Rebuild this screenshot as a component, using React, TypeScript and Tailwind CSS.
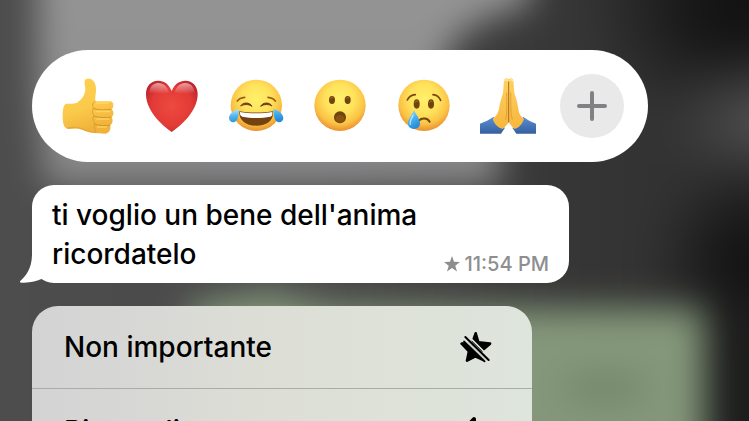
import type { ReactNode } from "react";

function Wallpaper() {
  return (
    <svg
      aria-hidden="true"
      className="absolute inset-0 h-full w-full"
      viewBox="0 0 749 421"
      preserveAspectRatio="none"
    >
      <defs>
        <filter id="soft" filterUnits="userSpaceOnUse" x="-100" y="-100" width="950" height="620" colorInterpolationFilters="sRGB">
          <feGaussianBlur stdDeviation="17" />
        </filter>
        <linearGradient id="base" x1="0" y1="0" x2="1" y2="0">
          <stop offset="0" stopColor="#4e4e4e" />
          <stop offset="0.45" stopColor="#494949" />
          <stop offset="0.7" stopColor="#363636" />
          <stop offset="1" stopColor="#2a2a2a" />
        </linearGradient>
        <linearGradient id="light" x1="0" y1="0" x2="0" y2="1">
          <stop offset="0" stopColor="#969696" />
          <stop offset="0.55" stopColor="#929292" />
          <stop offset="1" stopColor="#868688" />
        </linearGradient>
        <radialGradient id="dark">
          <stop offset="0" stopColor="#101010" />
          <stop offset="0.4" stopColor="#121212" stopOpacity="0.75" />
          <stop offset="1" stopColor="#1c1c1c" stopOpacity="0" />
        </radialGradient>
        <radialGradient id="glow">
          <stop offset="0" stopColor="#555555" />
          <stop offset="1" stopColor="#404040" stopOpacity="0" />
        </radialGradient>
      </defs>
      <g filter="url(#soft)">
        <rect x="-100" y="-100" width="950" height="620" fill="url(#base)" />
        <path d="M38-100H540L530 5C480 18 442 35 442 75L500 140V187H45L38 100Z" fill="url(#light)" />
        <ellipse cx="745" cy="5" rx="165" ry="130" fill="url(#dark)" />
        <ellipse cx="760" cy="120" rx="110" ry="75" fill="url(#glow)" />
        <ellipse cx="760" cy="262" rx="115" ry="110" fill="url(#dark)" />
        <path d="M190 306L270 292L330 308H704V520H190Z" fill="#84977a" />
        <ellipse cx="605" cy="388" rx="45" ry="14" fill="#71856a" />
        <path d="M714 310H850V520H714Z" fill="#1c1d1c" />
      </g>
    </svg>
  );
}

function ThumbsUp() {
  return (
    <svg viewBox="18 27 192 192" className="size-16" aria-hidden="true">
      <defs>
        <linearGradient id="thumb" x1="0" y1="0" x2="0.3" y2="1">
          <stop offset="0" stopColor="#ffd052" />
          <stop offset="0.6" stopColor="#fcca4b" />
          <stop offset="1" stopColor="#f0b23a" />
        </linearGradient>
      </defs>
      <path
        d="M104 48C106 40 116 39 124 43C136 49 139 65 138 79C137 90 135 98 136 109H176C186 108 191 114 190 121C190 128 187 132 184 133C192 136 193 153 184 157C190 162 189 177 180 181C184 188 180 206 166 206L137 204C117 202 107 199 97 194C84 189 68 190 54 192C42 192 37 172 38 151C38 131 41 117 50 116C62 116 72 117 81 113C94 106 104 91 106 76C107 66 102 57 104 48Z"
        fill="url(#thumb)"
      />
      <path d="M136 109C128 112 125 121 131 128C126 134 126 145 132 151C128 157 128 169 135 174C131 181 132 193 139 202" fill="none" stroke="#dca035" strokeWidth="3" />
      <path d="M132 131C148 136 168 135 183 133M133 154C150 159 169 158 183 157M136 178C149 182 166 183 180 181" fill="none" stroke="#d6962a" strokeWidth="3" strokeLinecap="round" />
      <path d="M140 114H176M139 139H178M141 162H177M143 186H169" fill="none" stroke="#ffdc6c" strokeWidth="5" strokeLinecap="round" opacity="0.7" />
      <path d="M53 189C66 187 82 186 98 192C109 198 121 201 138 203" fill="none" stroke="#d9952a" strokeWidth="4" opacity="0.5" />
    </svg>
  );
}

function Heart() {
  return (
    <svg viewBox="270 27 192 192" className="size-16" aria-hidden="true">
      <defs>
        <radialGradient id="heart" cx="0.5" cy="0.5" r="0.6">
          <stop offset="0" stopColor="#ee4a40" />
          <stop offset="0.65" stopColor="#e23a36" />
          <stop offset="1" stopColor="#bd222b" />
        </radialGradient>
        <linearGradient id="shine" x1="0" y1="0" x2="0" y2="1">
          <stop offset="0" stopColor="#fff" stopOpacity="0.55" />
          <stop offset="1" stopColor="#fff" stopOpacity="0" />
        </linearGradient>
      </defs>
      <path
        d="M365 78C356 57 343 47 325 47C302 47 288 64 288 87C288 130 322 170 365 201C409 170 443 130 443 87C443 64 428 47 406 47C388 47 373 57 365 78Z"
        fill="url(#heart)"
      />
      <path d="M298 82C299 65 310 54 325 54C341 54 352 65 357 82C340 88 314 88 298 82Z" fill="url(#shine)" />
      <path d="M433 82C432 65 421 54 406 54C390 54 379 65 374 82C391 88 417 88 433 82Z" fill="url(#shine)" />
    </svg>
  );
}

function FaceGradient({ id }: { id: string }) {
  return (
    <defs>
      <radialGradient id={id} cx="0.5" cy="0.38" r="0.64">
        <stop offset="0" stopColor="#fff06a" />
        <stop offset="0.45" stopColor="#ffe25c" />
        <stop offset="0.75" stopColor="#fbc346" />
        <stop offset="1" stopColor="#e68a2a" />
      </radialGradient>
      <linearGradient id={id + "-tear"} x1="0" y1="0" x2="0.4" y2="1">
        <stop offset="0" stopColor="#bdebff" />
        <stop offset="0.5" stopColor="#50b5ef" />
        <stop offset="1" stopColor="#258ddb" />
      </linearGradient>
    </defs>
  );
}

function Joy() {
  return (
    <svg viewBox="27 27 192 192" className="size-16" aria-hidden="true">
      <FaceGradient id="joy" />
      <circle cx="124" cy="121" r="77" fill="url(#joy)" />
      <path d="M67 108C72 101 79 98 89 97M159 97C169 98 176 101 181 108" fill="none" stroke="#9b5d17" strokeWidth="5" strokeLinecap="round" />
      <path d="M77 123C84 111 104 111 111 124C101 117 87 117 77 123ZM137 124C144 111 164 111 171 123C161 117 147 117 137 124Z" fill="#6c3d10" stroke="#6c3d10" strokeWidth="3" strokeLinejoin="round" />
      <path d="M73 139C98 144 149 144 174 139C177 165 157 182 124 182C91 182 71 165 73 139Z" fill="#72420f" />
      <path d="M75 141C99 146 148 146 172 141C173 148 172 153 166 155C141 160 107 160 82 155C76 153 74 148 75 141Z" fill="#fff" />
      <path d="M72 132C59 134 43 146 42 158C42 168 50 174 59 171C69 167 71 151 72 132ZM175 132C188 134 204 146 205 158C205 168 197 174 188 171C178 167 176 151 175 132Z" fill="url(#joy-tear)" />
    </svg>
  );
}

function Surprised() {
  return (
    <svg viewBox="279 27 192 192" className="size-16" aria-hidden="true">
      <FaceGradient id="surprised" />
      <circle cx="375" cy="121" r="77" fill="url(#surprised)" />
      <ellipse cx="351" cy="105" rx="9" ry="12" fill="#70430f" />
      <ellipse cx="398" cy="105" rx="9" ry="12" fill="#70430f" />
      <path d="M346 101C348 98 352 97 355 99M393 101C395 98 399 97 402 99" stroke="#ad7425" strokeWidth="3" fill="none" />
      <ellipse cx="375" cy="157" rx="18" ry="18" fill="#70430f" />
      <ellipse cx="375" cy="161" rx="13" ry="11" fill="#895312" />
    </svg>
  );
}

function Crying() {
  return (
    <svg viewBox="21 27 192 192" className="size-16" aria-hidden="true">
      <FaceGradient id="crying" />
      <circle cx="117" cy="121" r="77" fill="url(#crying)" />
      <path d="M67 105C71 96 80 90 91 89M144 89C155 90 163 97 167 106" fill="none" stroke="#76480e" strokeWidth="5" strokeLinecap="round" />
      <ellipse cx="95" cy="117" rx="9" ry="14" fill="#70430f" />
      <ellipse cx="138" cy="117" rx="9" ry="14" fill="#70430f" />
      <path d="M90 113C92 108 96 107 99 110M133 113C135 108 139 107 142 110" stroke="#b17a2c" strokeWidth="3" fill="none" />
      <path d="M103 166C110 158 127 158 134 170" fill="none" stroke="#70430f" strokeWidth="6" strokeLinecap="round" />
      <path d="M87 134C82 148 69 161 69 175C69 186 77 192 87 192C97 192 105 186 105 175C105 161 92 148 87 134Z" fill="url(#crying-tear)" />
      <path d="M84 151C79 161 74 168 76 178" fill="none" stroke="#dcf6ff" strokeWidth="4" strokeLinecap="round" opacity="0.7" />
    </svg>
  );
}

function Praying() {
  return (
    <svg viewBox="273 27 192 192" className="size-16" aria-hidden="true">
      <defs>
        <linearGradient id="palms" x1="0" y1="0" x2="0" y2="1">
          <stop offset="0" stopColor="#ffd262" />
          <stop offset="1" stopColor="#f6b63c" />
        </linearGradient>
        <linearGradient id="sleeves" x1="0" y1="0" x2="0" y2="1">
          <stop offset="0" stopColor="#5b90d6" />
          <stop offset="1" stopColor="#345f9f" />
        </linearGradient>
      </defs>
      <path d="M285 176C299 171 314 163 326 155C331 173 341 185 360 188L348 206H285ZM453 176C439 171 426 163 414 155C409 173 401 185 382 188L394 206H453Z" fill="url(#sleeves)" />
      <path
        d="M371 43C367 38 359 38 357 46L354 84C350 98 345 111 342 131C339 145 334 153 323 161C327 175 337 187 353 192C361 186 366 179 371 172C377 179 381 186 389 192C404 187 413 175 417 161C406 153 402 145 400 131C397 111 393 98 388 84L385 46C383 38 375 38 371 43Z"
        fill="url(#palms)"
      />
      <path d="M371 50V172" stroke="#b06c17" strokeWidth="3" />
      <path d="M365 83C365 115 367 144 362 164M377 83C378 115 376 144 382 164" fill="none" stroke="#e3a037" strokeWidth="3" />
      <path d="M358 48C361 43 367 43 368 48M374 48C376 43 381 43 384 48" fill="none" stroke="#fff0ca" strokeWidth="3" />
    </svg>
  );
}

const reactions: { label: string; icon: ReactNode }[] = [
  { label: "Mi piace", icon: <ThumbsUp /> },
  { label: "Cuore", icon: <Heart /> },
  { label: "Risata", icon: <Joy /> },
  { label: "Sorpresa", icon: <Surprised /> },
  { label: "Tristezza", icon: <Crying /> },
  { label: "Grazie", icon: <Praying /> },
];

function StarSlash() {
  return (
    <svg viewBox="90 60 96 96" className="size-8" aria-hidden="true">
      <path
        d="M137 67L145 94L180 98L157 118L129 90ZM95 98L111 97L162 148L136 136L111 149L117 121Z"
        fill="#000"
        stroke="#000"
        strokeWidth="8"
        strokeLinejoin="round"
      />
      <path d="M96 80L173 157M111 71L184 144" stroke="#dfe5dc" strokeWidth="5" fill="none" />
      <path d="M106 78L176 147" stroke="#000" strokeWidth="6" strokeLinecap="round" />
      <path d="M102 91L164 151" stroke="#000" strokeWidth="5" strokeLinecap="round" />
    </svg>
  );
}

function ReplyArrow() {
  return (
    <svg viewBox="0 0 32 32" className="size-8" aria-hidden="true">
      <path d="M14 4V11C24 11 30 17 30 28C26 22 22 20 15 20V26L3 16Z" fill="#000" stroke="#000" strokeWidth="4" strokeLinejoin="round" />
    </svg>
  );
}

function MenuItem({ label, icon }: { label: string; icon: ReactNode }) {
  return (
    <button type="button" className="flex h-[83px] w-full shrink-0 items-center justify-between pr-10 pl-8 text-left text-[28px] leading-8 font-medium">
      <span>{label}</span>
      {icon}
    </button>
  );
}

export default function App() {
  return (
    <main className="relative h-screen overflow-hidden bg-[#444] font-[Inter,sans-serif] text-black">
      <Wallpaper />
      <div className="relative flex flex-col items-start px-8 pt-[50px]">
        <div role="toolbar" aria-label="Reazioni" className="flex h-28 max-w-full items-center gap-5 rounded-full bg-white px-6">
          {reactions.map(({ label, icon }) => (
            <button key={label} type="button" aria-label={label} className="size-16 shrink-0">
              {icon}
            </button>
          ))}
          <button type="button" aria-label="Altre reazioni" className="flex size-16 shrink-0 items-center justify-center rounded-full bg-[#e9e9e9]">
            <svg viewBox="0 0 32 32" className="size-8" aria-hidden="true">
              <path d="M16 3V29M3 16H29" stroke="#808184" strokeWidth="4" strokeLinecap="round" />
            </svg>
          </button>
        </div>

        <article className="relative mt-[23px] flex w-full max-w-[537px] items-end justify-between rounded-[22px] bg-white px-5 pt-[11px] pb-[9px]">
          <svg viewBox="28 240 66 84" className="absolute bottom-0 -left-3 h-7 w-[22px]" aria-hidden="true">
            <path d="M64 238C64 280 45 304 28 319C26 323 30 324 40 323C62 322 80 317 94 311V238Z" fill="#fff" />
          </svg>
          <p className="text-[28px] leading-[39px] font-medium">
            ti voglio un bene dell&apos;anima
            <br />
            ricordatelo
          </p>
          <div className="flex shrink-0 items-center gap-1 text-[#8e8e90]">
            <svg viewBox="0 0 16 16" className="size-4" aria-hidden="true">
              <path d="M8 0L10 5.7L16 6L11.3 9.7L13 15.5L8 12L3 15.5L4.7 9.7L0 6L6 5.7Z" fill="currentColor" />
            </svg>
            <time dateTime="23:54" className="text-[20px] leading-5 font-medium">
              11:54 PM
            </time>
          </div>
        </article>

        <nav aria-label="Azioni messaggio" className="mt-[23px] w-full max-w-[500px] divide-y divide-[#a9ada7] overflow-hidden rounded-t-[26px] bg-linear-to-r from-[#d3d3d4] via-[#dddfd6] to-[#dee5dc]">
          <MenuItem label="Non importante" icon={<StarSlash />} />
          <MenuItem label="Rispondi" icon={<ReplyArrow />} />
        </nav>
      </div>
    </main>
  );
}
